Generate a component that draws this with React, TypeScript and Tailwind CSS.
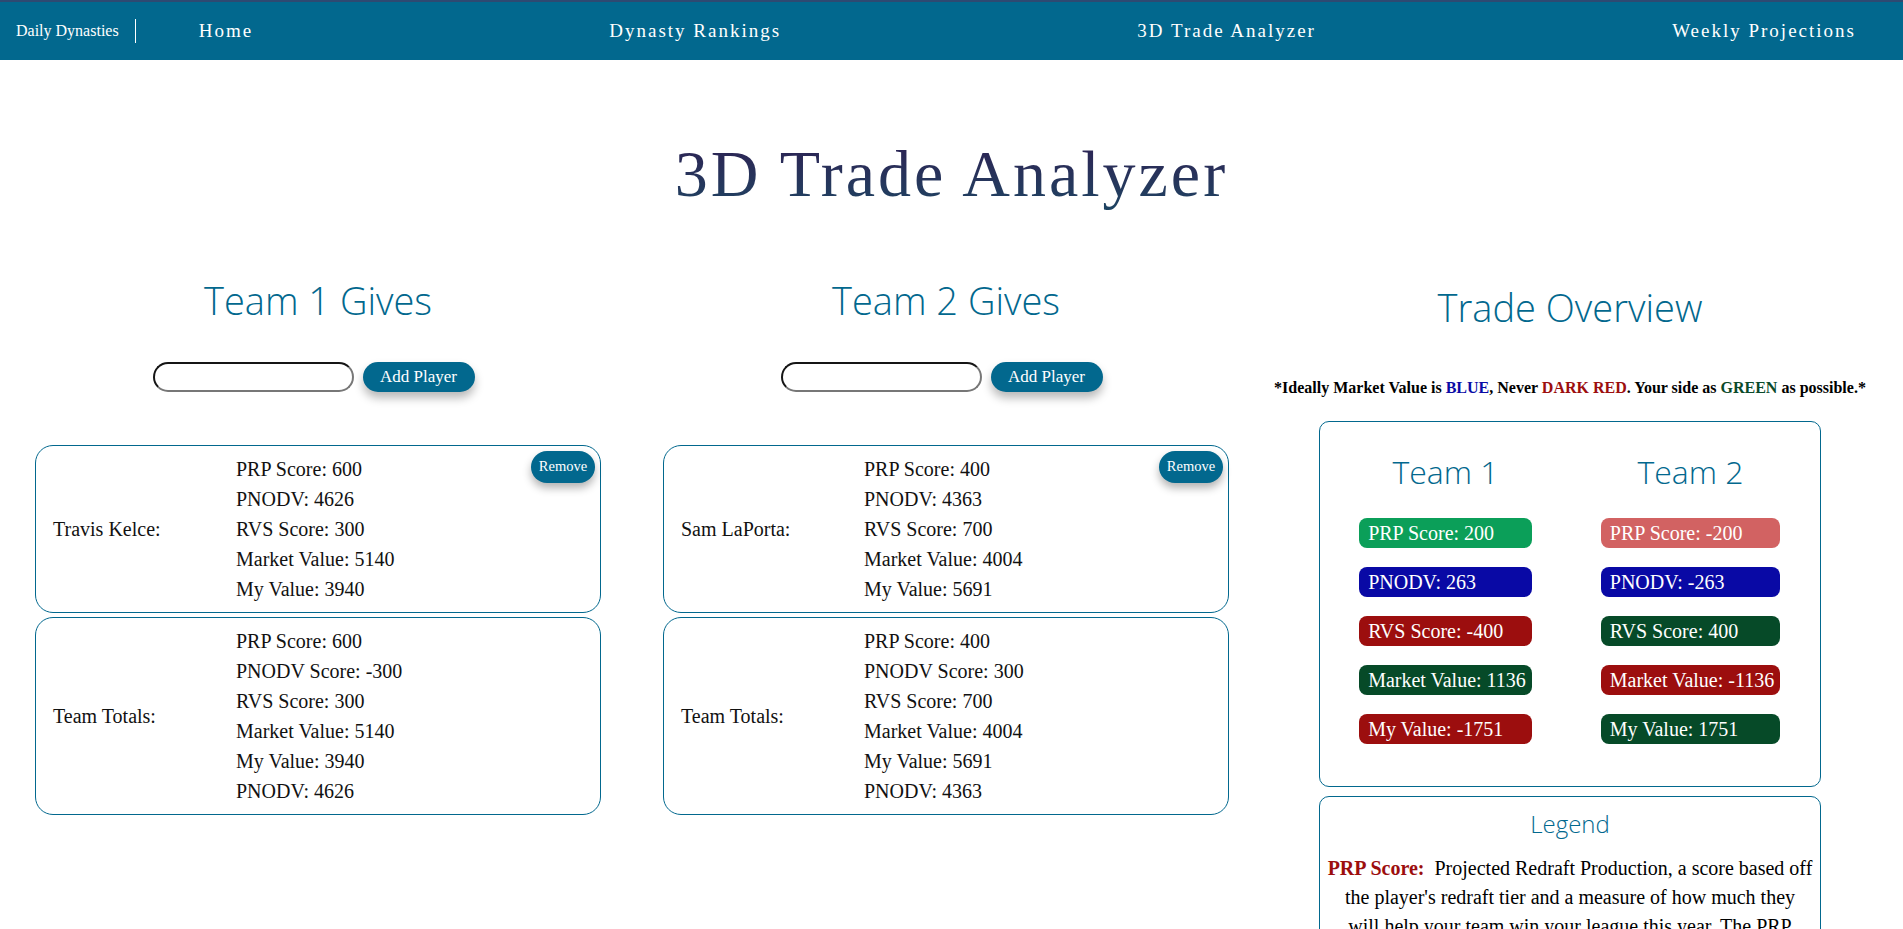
const NAV_LINKS = ["Home", "Dynasty Rankings", "3D Trade Analyzer", "Weekly Projections"];

const SERIF = "font-['Liberation_Serif','Times_New_Roman',serif]";
const SANS = "font-['Open_Sans','Noto_Sans',sans-serif]";

type Side = {
  title: string;
  player: string;
  stats: string[];
  totals: string[];
};

const SIDES: Side[] = [
  {
    title: "Team 1 Gives",
    player: "Travis Kelce:",
    stats: ["PRP Score: 600", "PNODV: 4626", "RVS Score: 300", "Market Value: 5140", "My Value: 3940"],
    totals: [
      "PRP Score: 600",
      "PNODV Score: -300",
      "RVS Score: 300",
      "Market Value: 5140",
      "My Value: 3940",
      "PNODV: 4626",
    ],
  },
  {
    title: "Team 2 Gives",
    player: "Sam LaPorta:",
    stats: ["PRP Score: 400", "PNODV: 4363", "RVS Score: 700", "Market Value: 4004", "My Value: 5691"],
    totals: [
      "PRP Score: 400",
      "PNODV Score: 300",
      "RVS Score: 700",
      "Market Value: 4004",
      "My Value: 5691",
      "PNODV: 4363",
    ],
  },
];

const BADGES = [
  [
    { label: "PRP Score: 200", color: "bg-[#0b9f59]" },
    { label: "PNODV: 263", color: "bg-[#0909a5]" },
    { label: "RVS Score: -400", color: "bg-[#9c0e0e]" },
    { label: "Market Value: 1136", color: "bg-[#064a28]" },
    { label: "My Value: -1751", color: "bg-[#9c0e0e]" },
  ],
  [
    { label: "PRP Score: -200", color: "bg-[#d26262]" },
    { label: "PNODV: -263", color: "bg-[#0909a5]" },
    { label: "RVS Score: 400", color: "bg-[#064a28]" },
    { label: "Market Value: -1136", color: "bg-[#9c0e0e]" },
    { label: "My Value: 1751", color: "bg-[#064a28]" },
  ],
];

function StatCard({ name, lines, removable }: { name: string; lines: string[]; removable?: boolean }) {
  return (
    <div className="relative border border-[#02688e] rounded-[18px] py-2 pl-[17px] flex items-center">
      <div className="w-[183px] shrink-0">{name}</div>
      <div className="flex flex-col">
        {lines.map((l, idx) => (
          <div key={idx} className="leading-[30px]">
            {l}
          </div>
        ))}
      </div>
      {removable && (
        <button className="absolute top-[5px] right-[5px] w-[64px] h-[32px] rounded-full bg-[#02688e] text-white text-[14.5px] shadow-[0_5px_9px_rgba(0,0,0,0.3)]">
          Remove
        </button>
      )}
    </div>
  );
}

function GiveColumn({ side }: { side: Side }) {
  return (
    <div className="w-[566px] shrink-0 flex flex-col">
      <h2 className={`${SANS} font-light text-[38px] leading-none text-center text-[#02688e] h-[38px]`}>
        {side.title}
      </h2>
      <div className="mt-[43px] pr-[9px] flex justify-center items-center gap-[9px]">
        <input
          className="w-[201px] h-[30px] rounded-full border-2 border-t-[#151515] border-l-[#151515] border-r-[#777] border-b-[#777] bg-white px-3 outline-none"
          type="text"
        />
        <button className="w-[112px] h-[30px] rounded-full bg-[#02688e] text-white text-[17px] shadow-[0_6px_10px_rgba(0,0,0,0.28)]">
          Add Player
        </button>
      </div>
      <div className="mt-[53px] flex flex-col gap-[4px] text-[20px] text-[#111]">
        <StatCard name={side.player} lines={side.stats} removable />
        <StatCard name="Team Totals:" lines={side.totals} />
      </div>
    </div>
  );
}

export default function App() {
  return (
    <div className={`${SERIF} min-h-screen bg-white text-black`}>
      <nav className="h-[60px] border-t-2 border-[#2e4a72] bg-[#02688e] flex items-center text-white">
        <div className="pl-4 text-[16px]">Daily Dynasties</div>
        <div className="ml-4 w-px h-[24px] bg-white" />
        <div className="flex-1 ml-[63px] pr-[47px] flex justify-between text-[19px] tracking-[2px]">
          {NAV_LINKS.map((l, idx) => (
            <a key={idx} href="#" className="cursor-pointer hover:underline">
              {l}
            </a>
          ))}
        </div>
      </nav>

      <h1 className="mt-[81px] text-center text-[66px] leading-none tracking-[3px]">
        <span className="bg-gradient-to-b from-[#2c1f52] to-[#1c4462] bg-clip-text text-transparent">
          3D Trade Analyzer
        </span>
      </h1>

      <div className="mt-[74px] pl-[35px] flex items-start">
        <GiveColumn side={SIDES[0]} />
        <div className="ml-[62px]">
          <GiveColumn side={SIDES[1]} />
        </div>

        <div className="ml-[90px] w-[502px] shrink-0 flex flex-col items-center">
          <h2 className={`${SANS} font-light text-[38px] leading-none text-[#02688e] h-[38px] mt-[7px]`}>
            Trade Overview
          </h2>
          <p className="mt-[52px] whitespace-nowrap font-bold text-[16px] leading-[20px]">
            *Ideally Market Value is <span className="text-[#0b0ba6]">BLUE</span>, Never{" "}
            <span className="text-[#9c0e0e]">DARK RED</span>. Your side as{" "}
            <span className="text-[#0a4a2a]">GREEN</span> as possible.*
          </p>

          <div className="mt-[23px] w-full border border-[#02688e] rounded-[10px] pt-[34px] pb-[42px] grid grid-cols-[251px_249px]">
            {BADGES.map((col, ci) => (
              <div key={ci} className={`flex flex-col items-center ${ci === 1 ? "pr-[10px]" : ""}`}>
                <h3 className={`${SANS} font-light text-[32px] leading-none h-[32px] text-[#02688e]`}>
                  Team {ci + 1}
                </h3>
                <div className="mt-[30px] inline-flex flex-col gap-[19px]">
                  {col.map((b, bi) => (
                    <div
                      key={bi}
                      className={`${b.color} h-[30px] rounded-[8px] pl-[9px] pr-[6px] text-white text-[20px] leading-[30px] whitespace-nowrap`}
                    >
                      {b.label}
                    </div>
                  ))}
                </div>
              </div>
            ))}
          </div>

          <div className="mt-[9px] w-full border border-[#02688e] rounded-[10px] pt-[15px] px-[4px] pb-4">
            <h3 className={`${SANS} font-light text-[24px] leading-none h-[24px] text-center text-[#02688e]`}>
              Legend
            </h3>
            <p className="mt-[18px] text-center text-[20px] leading-[29px]">
              <span className="font-bold text-[#9c0e0e]">PRP Score:</span>&nbsp; Projected Redraft Production, a
              score based off the player's redraft tier and a measure of how much they
              <br />
              will help your team win your league this year. The PRP Score difference shows which side gains more
              production now.
            </p>
          </div>
        </div>
      </div>
    </div>
  );
}
